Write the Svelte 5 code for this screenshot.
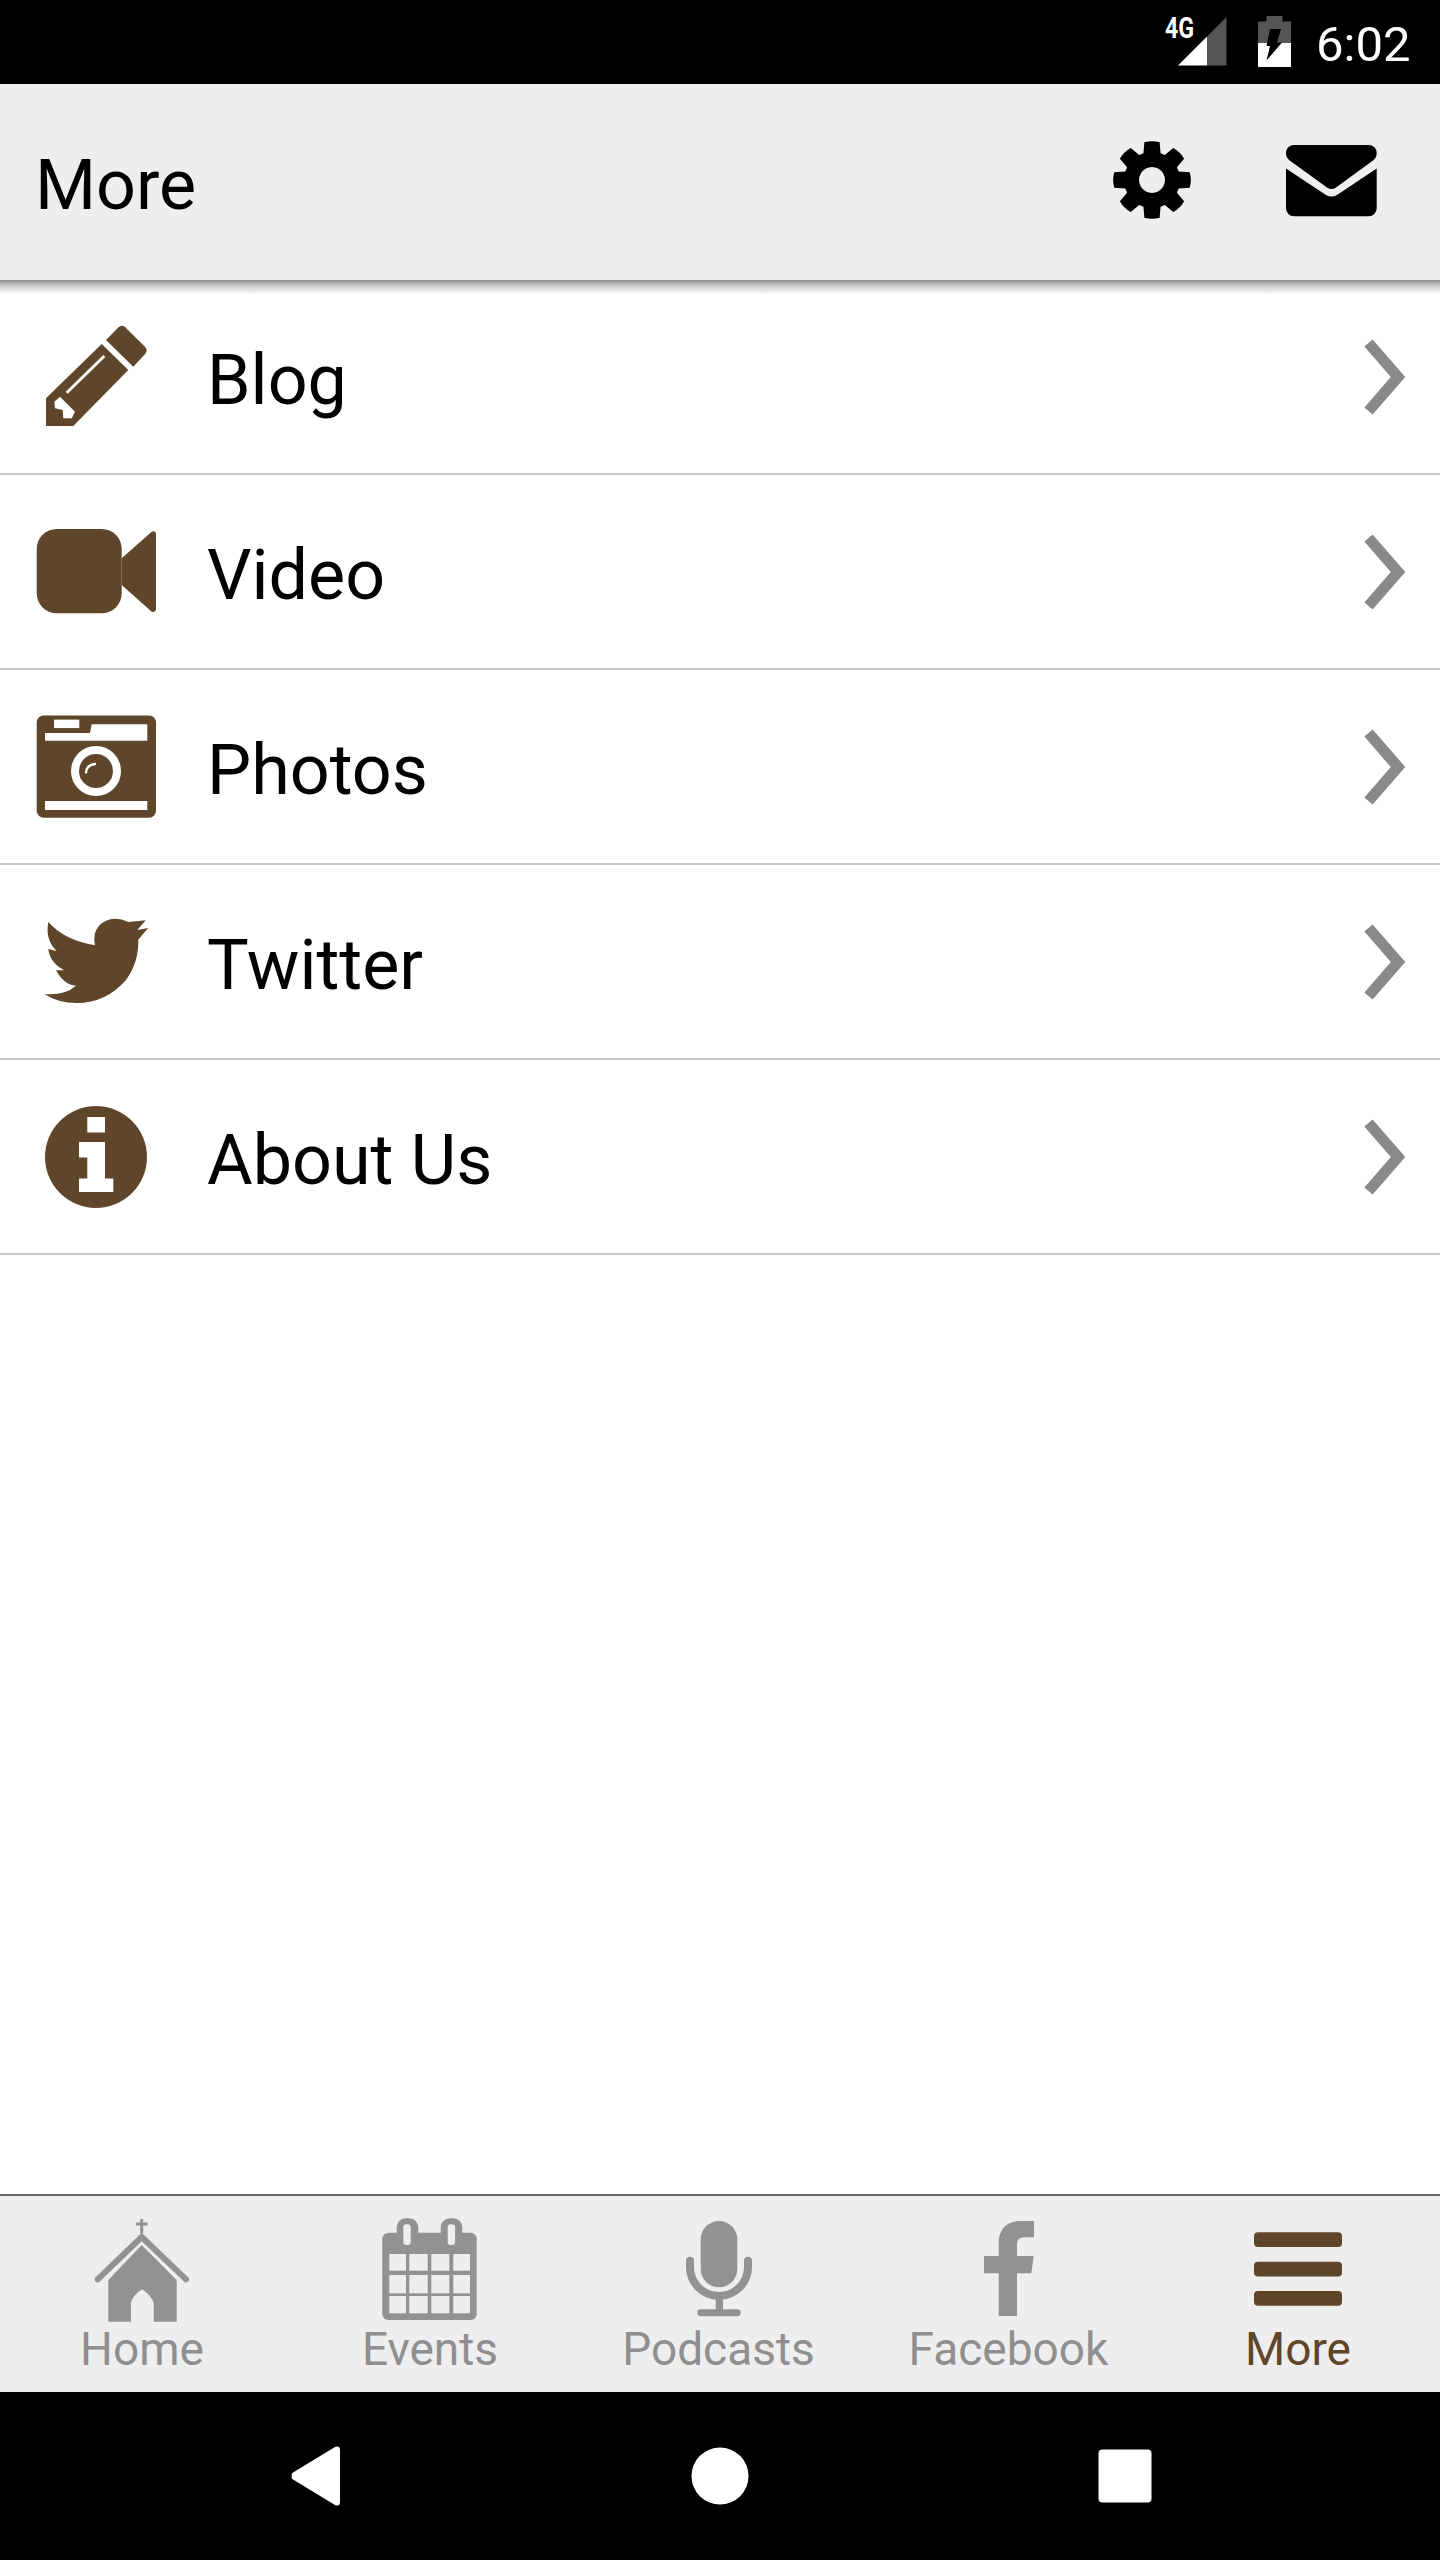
<script>
  const gear = (() => {
    const c = 40, n = 8;
    const p = (a, r) => `${(c + r * Math.sin(a)).toFixed(2)} ${(c - r * Math.cos(a)).toFixed(2)}`;
    let d = '';
    for (let i = 0; i < n; i++) {
      const a = (i * 2 * Math.PI) / n;
      const o = 0.2, m = 0.31;
      d += (i ? 'L' : 'M') + p(a - m, 28) + ' L' + p(a - o, 38.5) + ' Q' + p(a, 40) + ' ' + p(a + o, 38.5) + ' L' + p(a + m, 28) + ' ';
    }
    return d + 'Z M40 27 a13 13 0 1 0 .01 0 Z';
  })();
  const rows = ['Blog', 'Video', 'Photos', 'Twitter', 'About Us'];
  const tabs = ['Home', 'Events', 'Podcasts', 'Facebook', 'More'];
</script>

<div class="screen">
  <div class="status">
    <span class="net">4G</span>
    <svg class="signal" width="50" height="50" viewBox="0 0 50 50">
      <path d="M0 48.5 L29 19.5 V48.5 Z" fill="#fff" />
      <path d="M29 19.5 L48.5 0 V48.5 H29 Z" fill="#555" />
    </svg>
    <svg class="battery" width="33" height="51" viewBox="0 0 33 51">
      <path d="M8.5 0 H24.5 V5.5 H33 V27 H0 V5.5 H8.5 Z" fill="#555" />
      <rect y="27" width="33" height="24" fill="#fff" />
      <path d="M12 13 H23 L19 26.5 H24 L8.5 44.5 L12 30 H8.5 Z" fill="#000" />
    </svg>
    <span class="time">6:02</span>
  </div>

  <header class="header">
    <span class="title">More</span>
    <svg class="gear" width="80" height="80" viewBox="0 0 80 80"><path d={gear} fill="#000" fill-rule="evenodd" /></svg>
    <svg class="mail" width="91" height="72" viewBox="0 0 91 72">
      <path d="M0 8 a8 8 0 0 1 8-8 H82.7 a8 8 0 0 1 8 8 v1 q0 3.5 -3 6 L50 42.5 q-4.5 3 -9 0 L3 15 q-3 -2.5 -3 -6 Z" />
      <path d="M0 23.5 L40 50 q5.5 3 11 0 L90.7 23.5 V63.3 a8 8 0 0 1 -8 8 H8 a8 8 0 0 1 -8 -8 Z" />
    </svg>
  </header>

  <main class="list">
    <div class="shadow"></div>
    {#each rows as label, i}
      <div class="row">
        <svg class="icon" width="120" height="120" viewBox="0 0 120 120" fill="#5f4529">
          {#if i === 0}
            <path d="M70 23 L82.3 10.5 Q85.5 7.5 89 10 L109 29.7 Q112 33 109.5 36.5 L97.3 49.7 Z" />
            <path d="M65.7 27 L92.3 53 L37.3 109 H10 V81.3 Z" />
            <path d="M30.7 75.7 L68.3 39" stroke="#fff" stroke-width="3" />
            <path d="M24 79.7 L39 94.7 L35.7 101.3 H27.3 L26.7 93 L19 91.3 L18.3 84.7 Z" fill="#fff" />
          {:else if i === 1}
            <rect x="0.7" y="17" width="85" height="84.3" rx="20" />
            <path d="M85.7 46.3 L115.7 19.7 Q120 18 120 23 V96.3 Q120 101 115.7 99.7 L85.7 73 Z" />
          {:else if i === 2}
            <rect x="0.7" y="8.4" width="119.3" height="102.3" rx="7" />
            <path d="M9 26 H54 L55.7 17.2 H111.3 V33.8 H9 Z" fill="#fff" />
            <rect x="18" y="12.6" width="25.3" height="8.5" fill="#fff" />
            <circle cx="60" cy="64" r="21" fill="none" stroke="#fff" stroke-width="8" />
            <path d="M50 65.3 Q50.5 58 59 57" fill="none" stroke="#fff" stroke-width="2.5" stroke-linecap="round" />
            <rect x="9" y="94" width="102.3" height="9" fill="#fff" />
          {:else if i === 3}
            <path d="M12.3 20 Q28 38 59 43.3 Q56 29 66 21 Q78 13 92.3 20 L109.7 18.3 L101.3 28 L112.3 26 L102.3 37.5 Q103 60 90 78 Q70 101 40.7 101 Q22 101 8.3 92 Q28 94 40 83.7 Q28 83 20 68.3 L28.3 68.3 Q14 61 12.3 47 L20.7 49 Q9 38 12.3 20 Z" />
          {:else}
            <circle cx="60" cy="60" r="51" />
            <path d="M51.3 20 H69 V35.5 H51.3 Z M43 45 H69 V81.5 H77.3 V95 H43 V81.5 H51.3 V60.5 H43 Z" fill="#fff" />
          {/if}
        </svg>
        <span class="label">{label}</span>
        <svg class="chev" width="44" height="80" viewBox="0 0 44 80"><path d="M4.5 6 L34 40 L4.5 74" fill="none" stroke="#898989" stroke-width="11" /></svg>
      </div>
    {/each}
  </main>

  <nav class="tabs">
    {#each tabs as label, i}
      <div class="tab" class:active={i === 4}>
        <svg width="120" height="110" viewBox="0 0 120 110" fill="#929292">
          {#if i === 0}
            <path d="M59.7 3 V17 M54 8 H65.5" stroke="#929292" stroke-width="3" fill="none" />
            <path d="M15.7 63.3 L59.7 21 L104 63.3" stroke="#929292" stroke-width="6" stroke-linecap="round" fill="none" />
            <path d="M26.3 64 L59.7 29 L94.7 64 V105.7 H71.7 V87.3 Q70 80 60 73.3 Q50 80 49 87.3 V105.7 H26.3 Z" />
          {:else if i === 1}
            <rect x="12.3" y="16.7" width="94.4" height="87.3" rx="6" />
            <rect x="26.7" y="2.3" width="21.6" height="34" rx="9" />
            <rect x="70.7" y="2.3" width="21.6" height="34" rx="9" />
            <g fill="#eee">
              <rect x="33.3" y="8.3" width="7.4" height="20.7" rx="3" />
              <rect x="77.7" y="8.3" width="7.4" height="20.7" rx="3" />
              {#each [[38, 16.7], [59, 18.3], [80, 17.3]] as r}
                {#each [[19.3, 16.7], [39.3, 18.4], [61.3, 18], [83.3, 16.7]] as c}
                  <rect x={c[0]} y={r[0]} width={c[1]} height={r[1]} />
                {/each}
              {/each}
            </g>
          {:else if i === 2}
            <rect x="41.7" y="5" width="36.6" height="66.3" rx="18.3" />
            <path d="M31 44.7 V51 a29 29 0 0 0 58 0 V44.7" fill="none" stroke="#929292" stroke-width="8" stroke-linecap="round" />
            <rect x="56.7" y="82" width="7.3" height="14" />
            <rect x="38.3" y="93.3" width="43.4" height="6.9" rx="3.4" />
          {:else if i === 3}
            <path d="M49.7 100 V57.3 H35 V40 H49.7 V27.3 C49.7 13 58 5 71 5 H85 V21.3 H76 C70 21.3 68 24 68 29 V40 H84.7 L82.3 57.3 H68 V100 Z" />
          {:else}
            <g fill="#5f4529">
              <rect x="16" y="16.3" width="88" height="14.7" rx="4" />
              <rect x="16" y="45.7" width="88" height="14.7" rx="4" />
              <rect x="16" y="75" width="88" height="14.7" rx="4" />
            </g>
          {/if}
        </svg>
        <span class="tab-label">{label}</span>
      </div>
    {/each}
  </nav>

  <div class="nav">
    <svg class="back" width="60" height="60" viewBox="0 0 60 60"><path d="M4 30 Q2.5 28.5 5 26.5 L47 1 Q52 -1 52 4 V56 Q52 61 47 59 L5 33.5 Q2.5 32 4 30 Z" fill="#fff" /></svg>
    <svg width="60" height="60" viewBox="0 0 60 60"><circle cx="30" cy="30" r="28.5" fill="#fff" /></svg>
    <svg width="60" height="60" viewBox="0 0 60 60"><rect x="3.5" y="3.5" width="53" height="53" rx="4" fill="#fff" /></svg>
  </div>
</div>

<style>
  :global(body) {
    margin: 0;
    background: #fff;
  }
  svg {
    display: block;
    flex: none;
  }
  .screen {
    width: 1440px;
    height: 2560px;
    display: flex;
    flex-direction: column;
    font-family: Roboto, sans-serif;
    color: #000;
    overflow: hidden;
  }
  .status {
    height: 84px;
    background: #000;
    display: flex;
    align-items: flex-start;
    color: #fff;
    padding-left: 1165px;
    box-sizing: border-box;
  }
  .net {
    width: 34px;
    font-size: 29px;
    font-weight: 700;
    line-height: 1;
    margin-top: 14px;
    transform: scaleX(0.8);
    transform-origin: left center;
    margin-right: -21px;
  }
  .signal {
    margin-top: 17px;
  }
  .battery {
    margin-top: 16px;
    margin-left: 30px;
  }
  .time {
    font-size: 49px;
    line-height: 1;
    margin-top: 20px;
    margin-left: 25px;
  }
  .header {
    height: 196px;
    background: #eee;
    display: flex;
    align-items: center;
    padding-left: 36px;
    box-sizing: border-box;
    position: relative;
  }
  .title {
    font-size: 70px;
    width: 1076px;
    margin-left: -1px;
    margin-top: 6px;
    padding-right: 1px;
  }
  .gear {
    margin-top: -4px;
  }
  .mail {
    margin-left: 94px;
    margin-top: -2px;
  }
  .list {
    flex: 1;
    position: relative;
  }
  .shadow {
    position: absolute;
    left: 0;
    right: 0;
    top: 0;
    height: 15px;
    background: linear-gradient(#8d8d8d, #c6c6c6 35%, #f4f4f4 85%, #fff);
  }
  .row {
    height: 195px;
    box-sizing: border-box;
    border-bottom: 2px solid #c9c9c9;
    display: flex;
    align-items: center;
    padding-left: 36px;
  }
  .label {
    font-size: 70px;
    margin-left: 51px;
    margin-top: 6px;
    flex: 1;
  }
  .chev {
    margin-right: 32px;
    margin-top: 0;
  }
  .tabs {
    height: 198px;
    box-sizing: border-box;
    border-top: 2px solid #666;
    background: #eee;
    display: grid;
    grid-template-columns: 284px 292px 285px 295px 284px;
  }
  .tab {
    display: flex;
    flex-direction: column;
    align-items: center;
    padding-top: 20px;
    color: #8f8f8f;
  }
  .tab.active {
    color: #5f4529;
  }
  .tab-label {
    font-size: 46px;
    line-height: 52px;
    margin-top: -3px;
  }
  .nav {
    height: 168px;
    background: #000;
    display: flex;
    align-items: center;
    justify-content: center;
    gap: 345px;
  }
  .back {
    margin-left: 3px;
    margin-right: -3px;
  }
</style>
